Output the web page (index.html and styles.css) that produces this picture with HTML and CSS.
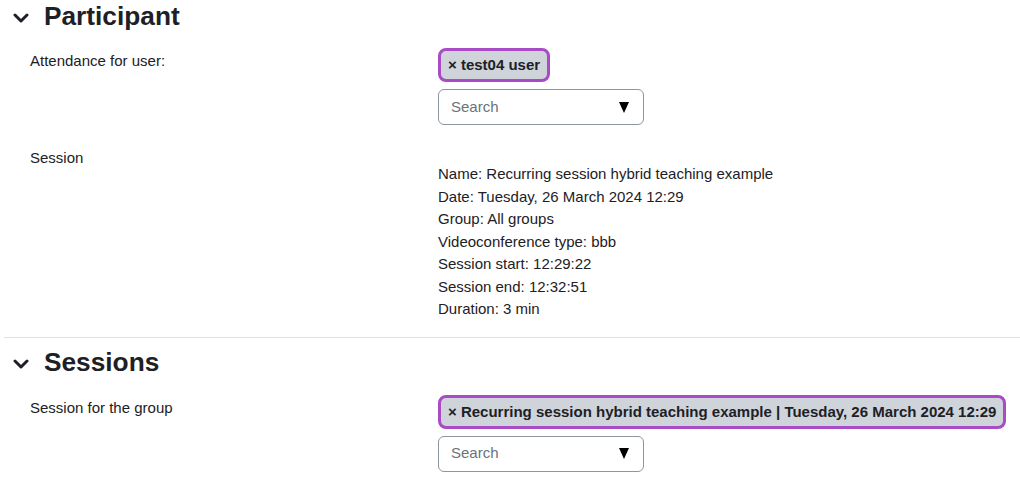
FILE: index.html
```html
<!DOCTYPE html>
<html>
<head>
<meta charset="utf-8">
<link rel="stylesheet" href="styles.css">
</head>
<body>
<div class="page">
  <section class="fs fs-first">
    <h3 class="legend">
      <svg class="chev" width="16" height="10" viewBox="0 0 16 10"><polyline points="2,2 8,8 14,2" fill="none" stroke="#1d2125" stroke-width="3" stroke-linecap="round" stroke-linejoin="round"/></svg>
      <span>Participant</span>
    </h3>
    <div class="row">
      <div class="label">Attendance for user:</div>
      <div class="field">
        <div class="chips"><span class="chip"><span class="x">×</span> test04 user</span></div>
        <div class="select"><span class="ph">Search</span><span class="caret"></span></div>
      </div>
    </div>
    <div class="row row-static">
      <div class="label">Session</div>
      <div class="field static">
        <div>Name: Recurring session hybrid teaching example</div>
        <div>Date: Tuesday, 26 March 2024 12:29</div>
        <div>Group: All groups</div>
        <div>Videoconference type: bbb</div>
        <div>Session start: 12:29:22</div>
        <div>Session end: 12:32:51</div>
        <div>Duration: 3 min</div>
      </div>
    </div>
  </section>
  <section class="fs fs-second">
    <h3 class="legend">
      <svg class="chev" width="16" height="10" viewBox="0 0 16 10"><polyline points="2,2 8,8 14,2" fill="none" stroke="#1d2125" stroke-width="3" stroke-linecap="round" stroke-linejoin="round"/></svg>
      <span>Sessions</span>
    </h3>
    <div class="row">
      <div class="label">Session for the group</div>
      <div class="field">
        <div class="chips"><span class="chip"><span class="x">×</span> Recurring session hybrid teaching example | Tuesday, 26 March 2024 12:29</span></div>
        <div class="select"><span class="ph">Search</span><span class="caret"></span></div>
      </div>
    </div>
  </section>
</div>
</body>
</html>
```
FILE: styles.css
```css
html, body {
  margin: 0;
  padding: 0;
  background: #fff;
}
body {
  font-family: "Liberation Sans", Arial, sans-serif;
  font-size: 15px;
  line-height: 22.5px;
  color: #1d2125;
}
.page {
  padding-left: 4px;
}
.fs-first {
  padding-top: 1px;
  padding-bottom: 16.5px;
  border-bottom: 1px solid #dee2e6;
}
.fs-second {
  padding-top: 9px;
}
.legend {
  margin: 0;
  display: flex;
  align-items: center;
  gap: 15px;
  padding-left: 9px;
  font-size: 26.25px;
  line-height: 31.5px;
  font-weight: 700;
}
.chev {
  display: block;
  flex: none;
  margin-top: 2px;
}
.row {
  display: grid;
  grid-template-columns: 408px 1fr;
  padding-left: 26px;
  margin-top: 16px;
}
.fs-first .row:first-of-type {
  margin-top: 15.5px;
}
.label {
  padding-top: 2px;
}
.row-static .label {
  padding-top: 6px;
}
.static {
  padding-top: 22px;
}
.chips {
  display: flex;
}
.chip {
  display: inline-block;
  background: #ced4da;
  border: 3px solid #a94ac6;
  border-radius: 8px;
  padding: 4px 7px;
  line-height: 20px;
  font-weight: 700;
  white-space: nowrap;
}
.x {
  font-size: 15px;
}
.select {
  margin-top: 7px;
  width: 206px;
  height: 36px;
  box-sizing: border-box;
  border: 1px solid #8f959e;
  border-radius: 6px;
  display: flex;
  align-items: center;
  justify-content: space-between;
  padding: 0 14px 0 12px;
}
.ph {
  color: #6a737b;
}
.caret {
  width: 0;
  height: 0;
  border-left: 5.5px solid transparent;
  border-right: 5.5px solid transparent;
  border-top: 11px solid #000;
}
```
